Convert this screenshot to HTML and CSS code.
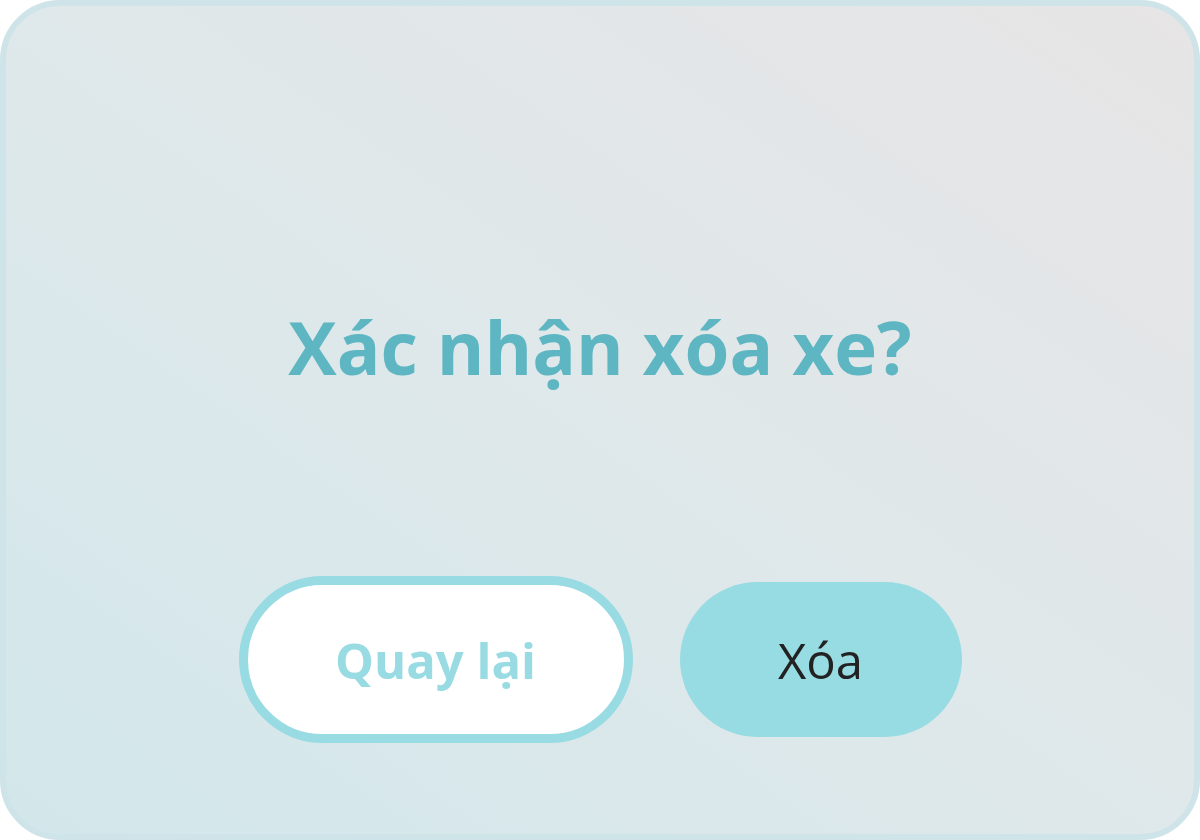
FILE: index.html
```html
<!DOCTYPE html>
<html lang="vi">
<head>
<meta charset="utf-8">
<title>Xác nhận xóa xe</title>
<link rel="stylesheet" href="styles.css">
</head>
<body>
<div class="dialog">
  <h1 class="title">Xác nhận xóa xe?</h1>
  <div class="actions">
    <button class="btn btn-back">Quay lại</button>
    <button class="btn btn-delete">Xóa</button>
  </div>
</div>
</body>
</html>
```
FILE: styles.css
```css
* { box-sizing: border-box; }
html, body { margin: 0; padding: 0; }
body {
  width: 1200px;
  height: 840px;
  background: #ffffff;
  font-family: "Open Sans", "Noto Sans", sans-serif;
}
.dialog {
  width: 1200px;
  height: 840px;
  border: 6px solid #cfe4e8;
  border-radius: 60px;
  background: linear-gradient(to top right, #d2e7eb 0%, #dfe8ea 50%, #e7e5e6 100%);
  display: flex;
  flex-direction: column;
  align-items: center;
  padding-top: 298px;
}
.title {
  margin: 0;
  font-size: 72.6px;
  line-height: 86px;
  font-weight: 700;
  color: #5fb6c3;
  letter-spacing: 0;
}
.actions {
  margin-top: 186px;
  display: flex;
  align-items: center;
  gap: 47px;
}
.btn {
  font-family: "Open Sans", "Noto Sans", sans-serif;
  font-size: 49px;
  border-radius: 999px;
  display: flex;
  align-items: center;
  justify-content: center;
  padding: 0;
  cursor: pointer;
}
.btn-back {
  width: 394px;
  height: 167px;
  background: #ffffff;
  border: 9px solid #98dbe3;
  color: #98dbe3;
  font-weight: 700;
}
.btn-delete {
  width: 282px;
  height: 155px;
  background: #97dbe3;
  border: none;
  color: #222222;
  font-weight: 450;
}
```
